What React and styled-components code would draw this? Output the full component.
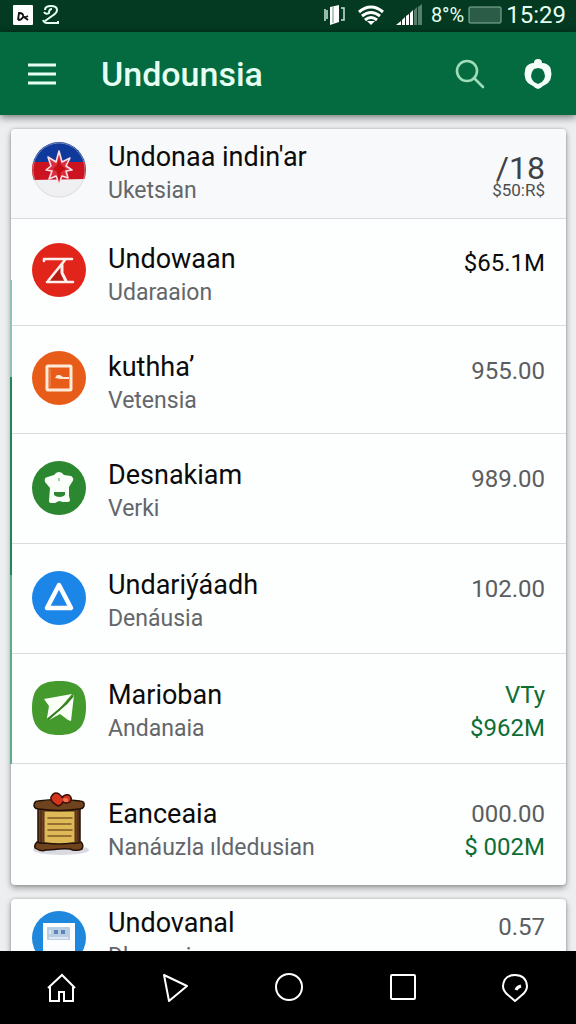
import React from 'react';
import styled, { createGlobalStyle, ThemeProvider } from 'styled-components';

const theme = {
  colors: {
    statusBar: '#033a21',
    appBar: '#046b40',
    page: '#eceeef',
    card: '#fdfefe',
    divider: '#d9dcde',
    text: '#0b0b0b',
    muted: '#63666a',
    value: '#5b5d60',
    positive: '#0c6e34',
    onDark: '#e6fff3'
  }
};

const GlobalStyle = createGlobalStyle`
  * {
    box-sizing: border-box;
  }

  body {
    margin: 0;
    font-family: Roboto, 'Liberation Sans', sans-serif;
  }

  button {
    display: grid;
    place-items: center;
    padding: 0;
    border: 0;
    background: none;
    color: inherit;
    cursor: pointer;
  }

  svg {
    display: block;
  }
`;

const Screen = styled.div`
  display: flex;
  flex-direction: column;
  height: 100vh;
  overflow: hidden;
  background: ${props => props.theme.colors.page};
`;

const StatusBar = styled.div`
  display: flex;
  flex: none;
  align-items: center;
  justify-content: space-between;
  height: 32px;
  padding: 0 10px 3px 13px;
  background: ${props => props.theme.colors.statusBar};
  color: ${props => props.theme.colors.onDark};
`;

const StatusGroup = styled.div`
  display: flex;
  align-items: center;
  gap: ${props => props.$gap}px;
`;

const StatusText = styled.span`
  font-size: ${props => props.$size}px;
  line-height: 28px;
`;

const AppBar = styled.header`
  display: flex;
  flex: none;
  align-items: center;
  height: 83px;
  padding: 0 21px 0 25px;
  background: ${props => props.theme.colors.appBar};
  color: ${props => props.theme.colors.onDark};
  box-shadow: 0 2px 8px rgba(0, 0, 0, 0.55);
  z-index: 1;
`;

const Title = styled.h1`
  flex: 1;
  margin: 0 0 0 42px;
  font-size: 34px;
  font-weight: 500;
  line-height: 40px;
`;

const Actions = styled.div`
  display: flex;
  gap: 34px;
`;

const BarButton = styled.button`
  width: 34px;
  height: 40px;
`;

const Content = styled.main`
  display: flex;
  flex: 1;
  flex-direction: column;
  gap: 14px;
  min-height: 0;
  padding: 14px 10px 0 11px;
  overflow: hidden;
`;

const Card = styled.ul`
  position: relative;
  flex: none;
  margin: 0;
  padding: 0;
  list-style: none;
  border-radius: 4px;
  background: ${props => props.theme.colors.card};
  box-shadow: 0 3px 6px rgba(0, 0, 0, 0.34), 0 0 3px rgba(0, 0, 0, 0.22);
`;

const ScrollMark = styled.div`
  position: absolute;
  top: 20%;
  bottom: 16%;
  left: -1px;
  width: 2px;
  background: linear-gradient(#8fc5b0 20%, #1a8a5c 20%, #1a8a5c 61%, #5cab8b 61%);
`;

const rowSpace = {
  lead: '12px 21px 11px',
  snug: '24px 21px 16px',
  middle: '25px 21px 16px',
  regular: '25px 21px 18px',
  last: '28px 21px 15px',
  next: '8px 21px 24px'
};

const Row = styled.li`
  display: flex;
  align-items: center;
  gap: 22px;
  padding: ${props => rowSpace[props.$space]};
  background: ${props => (props.$space === 'lead' ? '#f8f9fb' : 'transparent')};
  border-radius: ${props => (props.$space === 'lead' ? '4px 4px 0 0' : '0')};

  & + & {
    border-top: 1px solid ${props => props.theme.colors.divider};
  }
`;

const Avatar = styled.div`
  flex: none;
  align-self: flex-start;
  width: 54px;
  height: ${props => (props.$tall ? 78 : 64)}px;
  padding-top: ${props => props.$drop}px;
`;

const Labels = styled.div`
  flex: 1;
  min-width: 0;
`;

const Name = styled.div`
  color: ${props => props.theme.colors.text};
  font-size: 27px;
  line-height: 33px;
  white-space: nowrap;
`;

const Detail = styled.div`
  color: ${props => props.theme.colors.muted};
  font-size: 23px;
  line-height: 33px;
  white-space: nowrap;
`;

const Amounts = styled.div`
  align-self: ${props => (props.$single ? 'flex-start' : 'center')};
  padding-top: ${props => (props.$single ? 4 : 0)}px;
  text-align: right;
`;

const Amount = styled.div`
  color: ${props => props.theme.colors[props.$tone]};
  font-size: 24px;
  line-height: 33px;
  white-space: nowrap;
`;

const LeadAmount = styled.div`
  color: #3f4245;
  font-size: 32px;
  line-height: 32px;
`;

const LeadDetail = styled.div`
  color: #4b4e51;
  font-size: 17px;
  line-height: 12px;
`;

const NavBar = styled.nav`
  display: flex;
  flex: none;
  align-items: center;
  justify-content: space-between;
  height: 73px;
  padding: 0 43px 0 44px;
  background: #000;
  color: #fff;
`;

const NavButton = styled.button`
  width: 36px;
  height: 48px;
`;

const FlagIcon = () => (
  <svg width="54" height="56" viewBox="0 0 54 56">
    <clipPath id="flag">
      <ellipse cx="27" cy="28" rx="27" ry="28" />
    </clipPath>
    <g clipPath="url(#flag)">
      <path fill="#f0f0f2" d="M0 0h54v56H0z" />
      <path fill="#cc1420" d="M0 20h54v17L0 38z" />
      <path fill="#0f3a9c" d="M0 0h54v20H0z" />
    </g>
    <ellipse cx="27" cy="28" rx="26" ry="27" fill="none" stroke="#c9ccd4" strokeWidth="1" opacity=".5" />
    <path
      d="M27 9l3 11 8-4-4 8 6 4-6 1 2 7-6-2-3 7-3-7-7 3 3-8-6-1 5-4-3-9 8 5z"
      fill="#d8303f"
      stroke="#fbdfe6"
      strokeWidth="1.600"
      strokeLinejoin="round"
    />
    <path d="M27 16l2 7 5 4-5 3-2 11-2-11-4-3 4-4z" fill="#c80d16" />
  </svg>
);

const SigmaIcon = () => (
  <svg width="54" height="54" viewBox="0 0 54 54">
    <circle cx="27" cy="27" r="27" fill="#e1251b" />
    <path d="M28 26L17 38l16 1z" fill="#b81a14" />
    <path
      d="M12 16h28M12 16v2M15 39h26M33 17L16 38"
      fill="none"
      stroke="#fff0ee"
      strokeWidth="2.600"
      strokeLinecap="round"
    />
    <path d="M30 22v8l4 8" fill="none" stroke="#fff0ee" strokeWidth="3" strokeLinecap="round" />
  </svg>
);

const FrameIcon = () => (
  <svg width="54" height="54" viewBox="0 0 54 54">
    <circle cx="27" cy="27" r="27" fill="#e85c1a" />
    <rect x="15" y="15" width="24" height="24" rx="1" fill="none" stroke="#fdebd9" strokeWidth="3" />
    <path d="M23 27l2-3h3l3 2h6v2h-8z" fill="#fdebd9" />
    <path d="M18 18v18" stroke="#f3935a" strokeWidth="1" />
  </svg>
);

const BadgeIcon = () => (
  <svg width="54" height="54" viewBox="0 0 54 54">
    <circle cx="27" cy="27" r="27" fill="#2b8730" />
    <path
      d="M22 14q2-3 5-3t5 3l7 1q3 2 2 4.500L37 26v9l1 4q0 2-3 2h-4l-4-1-4 2h-3q-3 0-3-2l1-13-5-6q-1-3 1-4.500z"
      fill="#fafffa"
    />
    <path d="M22 31h11v3q-2 2-5.500 2T22 34z" fill="#2b8730" />
    <path d="M27 17v3" stroke="#8abb8d" strokeWidth="1.500" />
  </svg>
);

const TriangleIcon = () => (
  <svg width="54" height="54" viewBox="0 0 54 54">
    <circle cx="27" cy="27" r="27" fill="#1c86e8" />
    <path d="M27 14L39 37H15z" fill="none" stroke="#fff" strokeWidth="4.500" strokeLinejoin="round" />
  </svg>
);

const PlaneIcon = () => (
  <svg width="54" height="54" viewBox="0 0 54 54">
    <path
      d="M27 0c19 0 27 7 27 26 0 20-9 28-27 28S0 46 0 27C0 8 8 0 27 0z"
      fill="#449a2c"
    />
    <path d="M12 18l28-5-12 14-11 11-2-1 2-12z" fill="#fafff8" />
    <path d="M42 14l-3 26-3-1-8-6-11 6 11-10z" fill="#fafff8" />
    <path d="M41 15Q35 23 28 28L16 38" fill="none" stroke="#357c22" strokeWidth="1.800" />
  </svg>
);

const ScrollIcon = () => (
  <svg width="57" height="64" viewBox="0 0 57 64">
    <ellipse cx="29" cy="58" rx="28" ry="5" fill="#d9d9e2" />
    <path d="M6 16h42v38H6z" fill="#6d4223" stroke="#241208" strokeWidth="1.500" />
    <path d="M12 19h31v34H12z" fill="#dfb858" stroke="#4d2d13" strokeWidth="1" />
    <path d="M9 18v34M46 18v34" stroke="#3a200e" strokeWidth="1" />
    <path d="M16 26h24M16 32h23M16 38h24M16 44h23" stroke="#7d5a22" strokeWidth="1.500" strokeLinecap="round" />
    <path
      d="M6 9q21-3 42 0 5 0 4 5-1 3-5 3-20 3-40 0-4 0-5-3 0-5 4-5z"
      fill="#70431f"
      stroke="#241208"
      strokeWidth="1.500"
    />
    <path
      d="M5 50q4 2 8 1 14 2 28 0 5 1 8-1 3 3 1 7-4 2-9 1-4-2-14-1t-13 1q-5 2-11-2-1-3 2-6z"
      fill="#70431f"
      stroke="#241208"
      strokeWidth="1.500"
    />
    <path
      d="M26 14q-8-4-7-9 3-6 8-3 3 2 3 4 2-4 7-3 4 3 1 7-3 2-7 0-1 3-5 4z"
      fill="#d5351c"
      stroke="#3a0e08"
      strokeWidth="1.500"
    />
    <path d="M31 7q2-2 5 0v3h-4z" fill="#e9744a" />
  </svg>
);

const DeviceIcon = () => (
  <svg width="54" height="56" viewBox="0 0 54 56">
    <circle cx="27" cy="27" r="27" fill="#1f88dc" />
    <path d="M11 12h32v44H11z" fill="#fbfdff" />
    <rect x="15" y="16" width="23" height="13" rx="1" fill="#b9cee3" />
    <path d="M22 19h4v4h-4zM29 19h4v4h-4z" fill="#5c87b4" />
    <path d="M17 27h19M18 19v4" stroke="#dce8f3" strokeWidth="2" />
  </svg>
);

const accounts = [
  { icon: FlagIcon, drop: 1, name: "Undonaa indin'ar", detail: 'Uketsian', space: 'lead' },
  { icon: SigmaIcon, drop: 0, name: 'Undowaan', detail: 'Udaraaion', amounts: [['$65.1M', 'text']], space: 'snug' },
  { icon: FrameIcon, drop: 0, name: 'kuthha’', detail: 'Vetensia', amounts: [['955.00', 'value']], space: 'middle' },
  { icon: BadgeIcon, drop: 2, name: 'Desnakiam', detail: 'Verki', amounts: [['989.00', 'value']], space: 'regular' },
  { icon: TriangleIcon, drop: 2, name: 'Undariýáadh', detail: 'Denáusia', amounts: [['102.00', 'value']], space: 'regular' },
  { icon: PlaneIcon, drop: 2, name: 'Marioban', detail: 'Andanaia', amounts: [['VTy', 'positive'], ['$962M', 'positive']], space: 'regular' },
  { icon: ScrollIcon, drop: 0, tall: true, name: 'Eanceaia', detail: 'Nanáuzla ıldedusian', amounts: [['000.00', 'value'], ['$ 002M', 'positive']], space: 'last' }
];

const nextAccounts = [
  { icon: DeviceIcon, drop: 4, name: 'Undovanal', detail: 'Dhaneni', amounts: [['0.57', 'value']], space: 'next' }
];

const AccountRow = ({ account }) => {
  const { icon: Icon, drop, tall, name, detail, amounts, space } = account;

  return (
    <Row $space={space}>
      <Avatar $drop={drop} $tall={tall}>
        <Icon />
      </Avatar>
      <Labels>
        <Name>{name}</Name>
        <Detail>{detail}</Detail>
      </Labels>
      {amounts ? (
        <Amounts $single={amounts.length === 1}>
          {amounts.map(([text, tone]) => (
            <Amount key={text} $tone={tone}>{text}</Amount>
          ))}
        </Amounts>
      ) : (
        <Amounts $single={false}>
          <LeadAmount>/18</LeadAmount>
          <LeadDetail>$50:R$</LeadDetail>
        </Amounts>
      )}
    </Row>
  );
};

const App = () => (
  <ThemeProvider theme={theme}>
    <GlobalStyle />
    <Screen>
      <StatusBar>
        <StatusGroup $gap={9}>
          <svg width="20" height="20" viewBox="0 0 20 20">
            <rect width="20" height="20" rx="1" fill="#fff" />
            <path d="M5 15l1-7q5 0 4 4-1 3-5 3M10 11l5 4M15 11l-4 2" fill="none" stroke="#111" strokeWidth="1.800" />
          </svg>
          <svg width="17" height="20" viewBox="0 0 17 20" fill="none" stroke="#e6fff3" strokeWidth="2">
            <path d="M3 5q0-4 6-4 6 0 6 4 0 3-5 6l-7 5M1 15q1 3 4 3h11v-2M2 7q2 3 5 1 0-4 3-4" />
          </svg>
        </StatusGroup>
        <StatusGroup $gap={9}>
          <svg width="22" height="20" viewBox="0 0 22 20">
            <path d="M6 2l9-2v17l-9 3z" fill="#fff" />
            <path d="M1 4v12M3 5v9M17 3h3v12h-3" fill="none" stroke="#c9e5d7" strokeWidth="1.500" />
            <path d="M9 1v17" stroke="#6d9482" strokeWidth="1" />
          </svg>
          <svg width="32" height="20" viewBox="3 0 30 20">
            <path d="M6 7q12-10 24 0M9 11q9-7 18 0M12 15q6-5 12 0" fill="none" stroke="#fff" strokeWidth="3" />
            <path d="M14 16h8l-4 4z" fill="#fff" />
          </svg>
          <svg width="26" height="21" viewBox="0 0 26 21">
            <path d="M0 21l5-4v4zM6 16l3-3v8H6zM10 12l3-2v11h-3zM14 9l3-3v15h-3z" fill="#fff" />
            <path d="M18 6l3-3v18h-3zM22 3l4-3v21h-4z" fill="#55806b" />
          </svg>
          <StatusGroup $gap={4}>
            <StatusText $size={20}>8°%</StatusText>
            <svg width="34" height="18" viewBox="0 0 34 18">
              <rect x="1" y="1" width="32" height="16" rx="1" fill="#2b5c47" stroke="#8bb5a2" />
            </svg>
            <StatusText $size={24}>15:29</StatusText>
          </StatusGroup>
        </StatusGroup>
      </StatusBar>
      <AppBar>
        <BarButton aria-label="Open menu">
          <svg width="28" height="22" viewBox="0 0 28 22" stroke="currentColor" strokeWidth="3">
            <path d="M0 2h28M0 11h28M0 20h28" />
          </svg>
        </BarButton>
        <Title>Undounsia</Title>
        <Actions>
          <BarButton aria-label="Search">
            <svg width="30" height="30" viewBox="0 0 30 30" fill="none" stroke="#a0dcb9" strokeWidth="2.600">
              <circle cx="12" cy="12" r="10" />
              <path d="M19 19l9 9" strokeLinecap="round" />
            </svg>
          </BarButton>
          <BarButton aria-label="Settings">
            <svg width="28" height="32" viewBox="0 0 28 32">
              <path
                fill="#f4fffa"
                fillRule="evenodd"
                d="M10 5q0-4 4-4t4 4q5 0 8 4 1 2 1 4 1 3 0 6 0 3-3 6-3 2-5 3-3 3-5 3t-5-3q-2-1-5-3-3-3-3-6-1-3 0-6 0-2 1-4 3-4 8-4zM10 11q-3 3-3 7 0 3 3 6l4 2 4-2q3-3 3-6 0-4-3-7l-4-1z"
              />
            </svg>
          </BarButton>
        </Actions>
      </AppBar>
      <Content>
        <Card>
          {accounts.map((account, index) => (
            <AccountRow key={index} account={account} />
          ))}
          <ScrollMark as="li" aria-hidden="true" />
        </Card>
        <Card>
          {nextAccounts.map((account, index) => (
            <AccountRow key={index} account={account} />
          ))}
        </Card>
      </Content>
      <NavBar>
        <NavButton aria-label="Home">
          <svg width="30" height="30" viewBox="0 0 30 30" fill="none" stroke="currentColor" strokeWidth="2">
            <path d="M1 15L15 2l13 13M3 14v14h9v-9h5v9h9V14" />
          </svg>
        </NavButton>
        <NavButton aria-label="Play">
          <svg width="28" height="30" viewBox="0 0 28 30" fill="none" stroke="currentColor" strokeWidth="2">
            <path d="M3 2l23 11L8 28z" strokeLinejoin="round" />
          </svg>
        </NavButton>
        <NavButton aria-label="Circle">
          <svg width="30" height="30" viewBox="0 0 30 30" fill="none" stroke="currentColor" strokeWidth="2">
            <circle cx="15" cy="14" r="13" />
          </svg>
        </NavButton>
        <NavButton aria-label="Recent">
          <svg width="28" height="28" viewBox="0 0 28 28" fill="none" stroke="currentColor" strokeWidth="2">
            <rect x="3" y="1" width="24" height="24" rx="1" />
          </svg>
        </NavButton>
        <NavButton aria-label="Location">
          <svg width="28" height="30" viewBox="0 0 28 30" fill="none" stroke="currentColor" strokeWidth="2">
            <path d="M14 28l-7-6Q2 18 2 13 3 2 14 2t12 11q0 5-5 9z" strokeLinejoin="round" />
            <path d="M15 17q1-3 5-4" strokeWidth="3" />
          </svg>
        </NavButton>
      </NavBar>
    </Screen>
  </ThemeProvider>
);

export default App;
